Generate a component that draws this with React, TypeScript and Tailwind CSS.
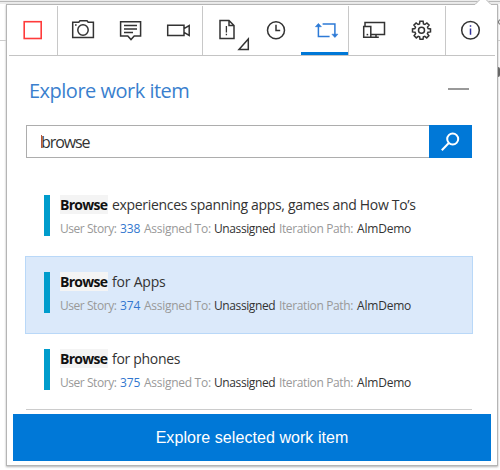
import React from "react";

const ink = "#333333";

function Cell({ children, color = ink, w = 48 }: { children: React.ReactNode; color?: string; w?: number }) {
  return (
    <svg width={w} height={49} viewBox={`0 0 ${w} 49`} fill="none" stroke={color} strokeWidth={1.5} className="block shrink-0">
      {children}
    </svg>
  );
}

const Divider = () => <div className="w-px shrink-0 bg-[#c8c8c8]" />;

function Toolbar() {
  return (
    <div className="mx-[2px] flex h-[50px] shrink-0 border-b border-[#c4c4c4]">
      <Cell color="#ff3b3b"><rect x="15.2" y="15.7" width="17" height="16.8" strokeWidth="1.6" /></Cell>
      <Divider />
      <Cell>
        <path d="M14.7 16.2H20.8L22 14.7H29L30.2 16.2H35.4V31.5H14.7Z" />
        <circle cx="25" cy="24" r="5.2" />
        <path d="M17 19h1.6" />
      </Cell>
      <Cell>
        <path d="M14.6 15.7H34.6V30H28.2L25 33.6L21.8 30H14.6Z" />
        <path d="M18 19.4H31M18 23H31M18 26.6H27" />
      </Cell>
      <Cell>
        <path d="M13.7 19.2H30V29.6H13.7ZM30 22.6L35.2 19.6V29.4L30 26.4" />
      </Cell>
      <Divider />
      <Cell>
        <path d="M17 14.5H26L31 19.5V32.4H17ZM26 14.5V19.5H31" />
        <path d="M23.4 20V26.6M23.4 27.8V29.2" strokeWidth="1.3" />
        <path d="M36 43.4H45.3V33Z" />
      </Cell>
      <Cell>
        <circle cx="25" cy="24.2" r="8.5" />
        <path d="M25 18.8V24.6H29.2" />
      </Cell>
      <div className="relative w-[49px] shrink-0">
        <Cell color="#2d7ad6" w={49}>
          <path d="M19.4 18.5V30.4H30.6M23.6 18H35.9V30.5" strokeWidth="1.5" />
          <path d="M16.4 20.7L19.4 17.4L22.4 20.7ZM32.9 28.2L35.9 31.5L38.9 28.2Z" fill="#2d7ad6" strokeWidth="0.6" />
        </Cell>
        <div className="absolute bottom-0 left-[2px] right-0 h-[3px] bg-[#0078d7]" />
      </div>
      <Divider />
      <Cell>
        <path d="M16 20V16.5H35.5V28.6H22M14.7 20.6H21.8V31.2H14.7ZM22 31.2H29.8M27 28.6V31" />
        <path d="M17.6 28.6h1.6" />
      </Cell>
      <Cell>
        <g transform="translate(24.5 24.3)">
          <circle r="3" />
          <path d="M-1.6-9H1.6L2-6.4L3.4-5.8L5.4-7.4L7.6-5.2L6-3.2L6.6-1.7L9-1.4V1.6L6.5 2L5.9 3.4L7.4 5.4L5.2 7.6L3.3 6.1L1.9 6.6L1.5 9H-1.5L-1.9 6.6L-3.3 6.1L-5.2 7.6L-7.4 5.4L-5.9 3.4L-6.5 2L-9 1.6V-1.4L-6.6-1.7L-6-3.2L-7.6-5.2L-5.4-7.4L-3.4-5.8L-2-6.4Z" />
        </g>
      </Cell>
      <Divider />
      <Cell>
        <circle cx="24.5" cy="24.3" r="8.8" />
        <path d="M24.5 22.5V28.8M24.5 19.2V20.8" stroke="#30309a" />
      </Cell>
    </div>
  );
}

function WorkItem({ rest, id, restClass, selected = false }: { rest: string; id: string; restClass: string; selected?: boolean }) {
  return (
    <div className={`-mb-px flex h-[78px] shrink-0 border pl-[18px] pt-[15px] ${selected ? "border-[#b9d8f8] bg-[#dbe9fa]" : "border-transparent"}`}>
      <div className="h-[41px] w-[6px] shrink-0 bg-[#009ccc]" />
      <div className="ml-[10px] whitespace-nowrap">
        <div className="flex h-[19px] text-[14px] leading-[19px] text-[#333]">
          <span className="w-[48px] bg-[#f4f4f4] font-bold tracking-[-0.7px] text-[#111]">Browse</span>
          <span className={`ml-[4px] ${restClass}`}>{rest}</span>
        </div>
        <div className="mt-[6px] flex h-[18px] text-[12px] leading-[18px] text-[#999]">
          <span className="w-[60px] tracking-[-0.45px]">User Story:</span>
          <span className="w-[24px] tracking-[-0.1px] text-[#3277cf]">{id}</span>
          <span className="w-[70px] tracking-[-0.28px]">Assigned To:</span>
          <span className="w-[65px] tracking-[-0.4px] text-[#333]">Unassigned</span>
          <span className="w-[78px] tracking-[-0.38px]">Iteration Path:</span>
          <span className="tracking-[-0.2px] text-[#333]">AlmDemo</span>
        </div>
      </div>
    </div>
  );
}

export default function App() {
  return (
    <div className="relative h-[470px] w-[500px] overflow-hidden bg-white font-['Open_Sans',sans-serif]">
      <div className="h-[2px] border-b border-[#b8b8b8] bg-[#ececec]" />
      <div className="h-[2px] bg-[#ececec]" />
      <div className="ml-[6px] flex h-[462px] w-[492px] flex-col border border-[#b5b5b5] bg-white pt-px shadow-[0_1px_2px_rgba(0,0,0,0.3)]">
        <Toolbar />
        <div className="mt-[20px] flex h-[30px] shrink-0 items-center justify-between pl-[22px] pr-[28px]">
          <h1 className="whitespace-nowrap text-[20px] leading-[30px] tracking-[-0.5px] text-[#3a7fce]">Explore work item</h1>
          <div className="mb-[5px] h-[2px] w-[21px] bg-[#999]" />
        </div>
        <div className="ml-[19px] mt-[19px] flex h-[33px] w-[446px] shrink-0">
          <div className="flex flex-1 items-center border border-r-0 border-[#adadad] pl-[14px] text-[16px] tracking-[-1.1px] text-[#333]">
            <span className="-mr-px h-[13px] w-px bg-[#b5563f]" />browse
          </div>
          <div className="flex w-[43px] bg-[#0078d7]">
            <svg width="43" height="33" fill="none" stroke="white" strokeWidth="2">
              <circle cx="23.7" cy="14" r="5.5" />
              <path d="M19.8 18L12.8 25.2" />
            </svg>
          </div>
        </div>
        <div className="ml-[18px] mt-[21px] flex w-[448px] shrink-0 flex-col">
          <WorkItem rest="experiences spanning apps, games and How To’s" id="338" restClass="tracking-[-0.32px]" />
          <WorkItem rest="for Apps" id="374" restClass="tracking-[-0.2px]" selected />
          <WorkItem rest="for phones" id="375" restClass="tracking-[-0.3px]" />
        </div>
        <div className="-mt-px ml-[19px] h-px w-[446px] shrink-0 bg-[#ccc]" />
        <button className="ml-[6px] mt-[4px] h-[47px] w-[478px] shrink-0 bg-[#0078d7] font-['Liberation_Sans',sans-serif] text-[16px] tracking-[0.06px] text-white">
          Explore selected work item
        </button>
      </div>
      {/* Slivers of the page behind the popup, and the popup's pointer */}
      <div className="absolute left-0 top-[40px] h-px w-[6px] bg-[#ccc]" />
      <div className="absolute left-[498px] top-[40px] h-px w-[2px] bg-[#ccc]" />
      <div className="absolute left-[498px] top-[19px] h-[6px] w-[6px] rounded-full border border-[#666]" />
      <div className="absolute left-[498px] top-[67px] h-[10px] w-[2px] rounded-r-full bg-[#666]" />
      <svg className="absolute left-[474px] top-0" width="18" height="6">
        <path d="M0 5L5 0H13L18 5V6H0Z" fill="white" />
        <path d="M0 4.5H1L5.5 0M12.5 0L17 4.5H18" fill="none" stroke="#b5b5b5" />
      </svg>
    </div>
  );
}
